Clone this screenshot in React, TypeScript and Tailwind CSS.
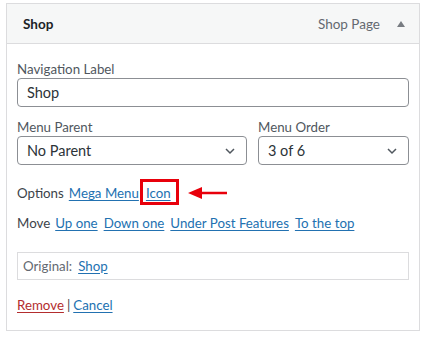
import React from 'react'

const font = { fontFamily: 'Lato, "Noto Sans", sans-serif' }

const Chevron = () => (
  <svg width="12" height="12" viewBox="0 0 12 12" className="absolute right-[10px] top-[8px] text-[#50575e]">
    <path d="M2 4l4 4 4-4" fill="none" stroke="currentColor" strokeWidth="1.5" />
  </svg>
)

const Select: React.FC<{ value: string; className?: string }> = ({ value, className }) => (
  <div
    className={
      'relative h-[29px] rounded-[4px] border border-[#8c8f94] bg-white pl-[9px] text-[14.5px] leading-[28px] text-[#2c3338] ' +
      (className || '')
    }
  >
    {value}
    <Chevron />
  </div>
)

const L: React.FC<{ children: React.ReactNode }> = ({ children }) => (
  <a href="#" className="text-[#2271b1] underline underline-offset-[2px]">
    {children}
  </a>
)

export default function App() {
  return (
    <div className="h-[337px] w-[425px] bg-white pl-[6px] pt-[3px]" style={font}>
      <div className="w-[414px] border border-[#dcdcde] bg-white">
        <div className="flex h-[40px] items-center border-b border-[#dcdcde] bg-[#f6f7f7] pl-[16px] pr-[14px] pt-[2px]">
          <span className="text-[13.5px] font-bold text-[#1d2327]">Shop</span>
          <span className="ml-auto text-[13.5px] text-[#646970]">Shop Page</span>
          <svg width="8" height="6" viewBox="0 0 8 6" className="mb-[2px] ml-[17px] text-[#787c82]">
            <path d="M4 0L8 6H0z" fill="currentColor" />
          </svg>
        </div>
        <div className="px-[10px] pb-[16px] pt-[15px] text-[13.3px] text-[#3c434a]">
          <div className="mb-px pt-px leading-[18px] text-[#50575e]">Navigation Label</div>
          <div className="-mt-px h-[29px] rounded-[4px] border border-[#8c8f94] pl-[9px] text-[14.5px] leading-[28px] text-[#2c3338]">
            Shop
          </div>
          <div className="mt-[10px] flex gap-[11px]">
            <div className="w-[230px]">
              <div className="pt-px leading-[18px] text-[#50575e]">Menu Parent</div>
              <Select value="No Parent" />
            </div>
            <div className="flex-1">
              <div className="pt-px leading-[18px] text-[#50575e]">Menu Order</div>
              <Select value="3 of 6" />
            </div>
          </div>
          <div className="mt-[19px] flex items-center leading-[18px]">
            <span className="mr-[5px]">Options</span>
            <L>Mega Menu</L>
            <span className="relative ml-[7px]">
              <L>Icon</L>
              <span className="absolute -left-[6px] -right-[8px] -top-[5px] -bottom-[3px] border-[3px] border-[#e8000b]" />
            </span>
            <svg width="40" height="12" viewBox="0 0 40 12" className="ml-[17px]">
              <path d="M0 6L14 0V12z" fill="#e8000b" />
              <path d="M12 6H39" stroke="#e8000b" strokeWidth="2.5" />
            </svg>
          </div>
          <div className="mt-[12px] flex gap-[6px] leading-[18px]">
            <span className="mr-[-1px]">Move</span>
            <L>Up one</L>
            <L>Down one</L>
            <L>Under Post Features</L>
            <L>To the top</L>
          </div>
          <div className="mt-[20px] flex h-[28px] items-center gap-[6px] border border-[#dcdcde] pl-[5px] pt-px text-[#646970]">
            <span>Original:</span>
            <L>Shop</L>
          </div>
          <div className="mt-[16px] leading-[18px]">
            <a href="#" className="text-[#b32d2e] underline underline-offset-[2px]">
              Remove
            </a>
            <span className="mx-[3px] text-[#3c434a]">|</span>
            <L>Cancel</L>
          </div>
        </div>
      </div>
    </div>
  )
}
